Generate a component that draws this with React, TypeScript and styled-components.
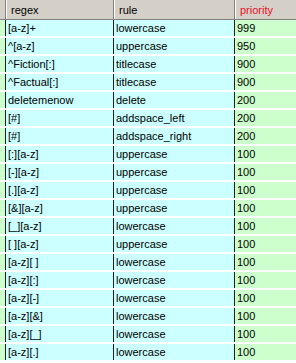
import React from 'react';
import styled, { createGlobalStyle } from 'styled-components';

const GlobalStyle = createGlobalStyle`
    html, body {
        margin: 0;
        padding: 0;
        background: #ffffff;
    }
`;

const Table = styled.div`
    width: 296px;
    height: 363px;
    overflow: hidden;
    font-family: 'Liberation Sans', Arial, sans-serif;
    font-size: 11px;
    color: #000000;
    background: #ffffff;
`;

const Cols = '5px 108px 121px 1fr';

const HeaderRow = styled.div`
    display: grid;
    grid-template-columns: ${Cols};
    height: 19px;
    background: #d4d0c8;
    border-bottom: 1px solid #808080;
    box-sizing: content-box;
`;

const HeadCell = styled.div<{ $red?: boolean }>`
    display: flex;
    align-items: center;
    padding-left: 5px;
    border-left: 1px solid #808080;
    box-shadow: inset 1px 0 0 #ffffff;
    color: ${(p) => (p.$red ? '#e8102a' : '#000000')};
    white-space: nowrap;
`;

const HeadGutter = styled.div`
    background: #d4d0c8;
`;

const Row = styled.div`
    display: grid;
    grid-template-columns: ${Cols};
    height: 16px;
    border-bottom: 2px solid #ffffff;
    box-sizing: content-box;
`;

const Gutter = styled.div`
    background: #ccffcc;
`;

const Cell = styled.div<{ $tone: 'cyan' | 'green' }>`
    display: flex;
    align-items: center;
    padding-left: 2px;
    border-left: 1px solid #202020;
    background: ${(p) => (p.$tone === 'cyan' ? '#ccffff' : '#ccffcc')};
    white-space: nowrap;
    overflow: hidden;
`;

const rows: [string, string, number][] = [
    ['[a-z]+', 'lowercase', 999],
    ['^[a-z]', 'uppercase', 950],
    ['^Fiction[:]', 'titlecase', 900],
    ['^Factual[:]', 'titlecase', 900],
    ['deletemenow', 'delete', 200],
    ['[#]', 'addspace_left', 200],
    ['[#]', 'addspace_right', 200],
    ['[:][a-z]', 'uppercase', 100],
    ['[-][a-z]', 'uppercase', 100],
    ['[.][a-z]', 'uppercase', 100],
    ['[&][a-z]', 'uppercase', 100],
    ['[_][a-z]', 'lowercase', 100],
    ['[ ][a-z]', 'uppercase', 100],
    ['[a-z][ ]', 'lowercase', 100],
    ['[a-z][:]', 'lowercase', 100],
    ['[a-z][-]', 'lowercase', 100],
    ['[a-z][&]', 'lowercase', 100],
    ['[a-z][_]', 'lowercase', 100],
    ['[a-z][.]', 'lowercase', 100],
];

export default function App() {
    return (
        <Table>
            <GlobalStyle />
            <HeaderRow>
                <HeadGutter />
                <HeadCell>regex</HeadCell>
                <HeadCell>rule</HeadCell>
                <HeadCell $red>priority</HeadCell>
            </HeaderRow>
            {rows.map(([regex, rule, priority], i) => (
                <Row key={i}>
                    <Gutter />
                    <Cell $tone="cyan">{regex.replace(/ /g, '\u00a0')}</Cell>
                    <Cell $tone="cyan">{rule}</Cell>
                    <Cell $tone="green">{priority}</Cell>
                </Row>
            ))}
        </Table>
    );
}
